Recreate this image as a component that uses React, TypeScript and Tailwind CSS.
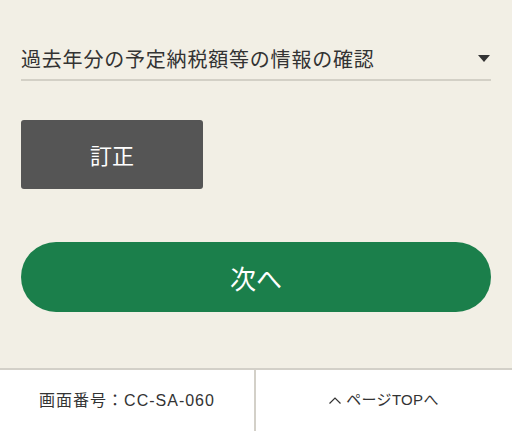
export default function App() {
  return (
    <div
      className="w-[512px] h-[431px] bg-[#f2efe5] flex flex-col overflow-hidden"
      style={{ fontFamily: '"Noto Sans CJK JP", "Noto Sans", sans-serif' }}
    >
      <div className="px-[21px] flex flex-col flex-1">
        <div className="pt-[46px] pb-[7px] border-b-[2px] border-[#d3d0c6] flex items-center justify-between">
          <span className="text-[20px] leading-[26px] text-[#333] tracking-[0.8px]">
            過去年分の予定納税額等の情報の確認
          </span>
          <svg width="12" height="8" viewBox="0 0 12 8" className="mr-[1px]">
            <polygon points="0,0 12,0 6,7" fill="#333" />
          </svg>
        </div>
        <button className="mt-[39px] w-[182px] h-[69px] bg-[#555555] rounded-[3px] text-white text-[22px] flex items-center justify-center">
          訂正
        </button>
        <button className="mt-[53px] w-full h-[70px] bg-[#1b7f4b] rounded-full text-white text-[26px] flex items-center justify-center">
          次へ
        </button>
      </div>
      <div
        className="h-[63px] bg-white border-t-[2px] border-[#d3d0c8] flex"
        style={{ fontFamily: '"Liberation Sans", "Noto Sans CJK JP", sans-serif' }}
      >
        <div className="w-[256px] flex items-center justify-center text-[16px] text-[#333] tracking-[1px] border-r-[2px] border-[#d3d0c8]">
          画面番号：CC-SA-060
        </div>
        <div className="flex-1 flex items-center justify-center text-[15px] text-[#333] tracking-[0.3px]">
          <svg width="12" height="7" viewBox="0 0 12 7" className="mr-[5px]">
            <polyline points="0.5,6.5 6,1 11.5,6.5" fill="none" stroke="#333" strokeWidth="1.2" />
          </svg>
          ページTOPへ
        </div>
      </div>
    </div>
  );
}
